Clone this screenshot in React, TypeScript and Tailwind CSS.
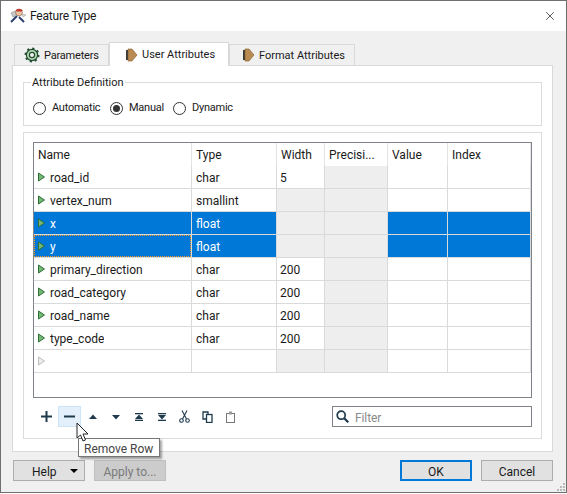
import { X } from "lucide-react";

const rows = [
  { name: "road_id", type: "char", width: "5" },
  { name: "vertex_num", type: "smallint", width: "", noWidth: true },
  { name: "x", type: "float", width: "", noWidth: true, selected: true },
  { name: "y", type: "float", width: "", noWidth: true, selected: true, focus: true },
  { name: "primary_direction", type: "char", width: "200" },
  { name: "road_category", type: "char", width: "200" },
  { name: "road_name", type: "char", width: "200" },
  { name: "type_code", type: "char", width: "200" },
  { name: "", type: "", width: "", noWidth: true, empty: true },
];

const gridCols = "grid grid-cols-[158px_85px_48px_63px_60px_83px]";

function Arrow({ muted }: { muted?: boolean }) {
  return (
    <svg width="9" height="11" viewBox="0 0 9 11" className="shrink-0">
      <path
        d="M1.5 1 L7.5 5 L1.5 9 Z"
        fill={muted ? "#ececec" : "#74b874"}
        stroke={muted ? "#bdbdbd" : "#2f6f3a"}
        strokeWidth="1"
      />
    </svg>
  );
}

function TabArrow() {
  return (
    <svg width="13" height="14" viewBox="0 0 13 14" className="shrink-0">
      <path d="M1 2 H3 V12 H1 Z" fill="#3a3a3a" />
      <path d="M3 1 H7 L12 7 L7 13 H3 Z" fill="#b98b52" stroke="#7d5a2e" strokeWidth="0.6" />
    </svg>
  );
}

function Gear() {
  return (
    <svg width="16" height="16" viewBox="0 0 16 16" className="shrink-0">
      <circle cx="8" cy="8" r="5.6" fill="#b5d6ae" stroke="#1f4d33" strokeWidth="1.2" />
      <circle cx="8" cy="8" r="6.6" fill="none" stroke="#1f4d33" strokeWidth="1.8" strokeDasharray="2.2 2.98" />
      <circle cx="8" cy="8" r="2.6" fill="#f0f0f0" stroke="#1f4d33" strokeWidth="1.2" />
    </svg>
  );
}

function AppIcon() {
  return (
    <svg width="18" height="18" viewBox="0 0 18 18" className="shrink-0">
      <path d="M2 15 L8 9" stroke="#2a3f6b" strokeWidth="2" />
      <path d="M10 10 L15 15" stroke="#2a3f6b" strokeWidth="2" />
      <path d="M2 6 L6 4 L8 8 L4 10 Z" fill="#c9c9c9" stroke="#777" strokeWidth="0.5" />
      <circle cx="10" cy="5.5" r="3.4" fill="#e8c4a4" stroke="#8a5a3a" strokeWidth="0.6" />
      <path d="M6.5 3.5 Q10 0 14 3.5 L12 4.5 L8 4.5 Z" fill="#c2392f" />
      <path d="M13 7 L17 8 L14 10 Z" fill="#d9d9d9" stroke="#888" strokeWidth="0.4" />
    </svg>
  );
}

function Radio({ label, checked }: { label: string; checked?: boolean }) {
  return (
    <div className="flex items-center gap-[6px]">
      <span className="flex h-[13px] w-[13px] items-center justify-center rounded-full border border-[#333] bg-white">
        {checked && <span className="h-[7px] w-[7px] rounded-full bg-[#333]" />}
      </span>
      <span className="text-[11px] tracking-[-0.25px]">{label}</span>
    </div>
  );
}

function TableRow({ row }: { row: (typeof rows)[number] }) {
  const bg = row.selected ? "bg-[#0078d7] text-white" : "bg-white";
  const grey = "bg-[#eeeeee]";
  const line = "border-r border-b border-[#dadada] h-[23px] leading-[25px]";
  return (
    <div className={gridCols}>
      <div className={`${line} ${bg} relative flex items-center gap-[4px] pl-[3px]`}>
        <Arrow muted={row.empty} />
        <span className="mt-[2px] truncate leading-[18px]">{row.name}</span>
        {row.focus && (
          <span className="absolute inset-0 border border-dotted border-[#f59a23]" />
        )}
      </div>
      <div className={`${line} ${bg} truncate px-[4px]`}>{row.type}</div>
      <div className={`${line} ${row.noWidth ? grey : "bg-white"} truncate px-[3px]`}>{row.width}</div>
      <div className={`${line} ${grey}`} />
      <div className={`${line} ${bg}`} />
      <div className={`${line} ${bg}`} />
    </div>
  );
}

function ToolIcon({ children, active }: { children: React.ReactNode; active?: boolean }) {
  return (
    <div
      className={`flex h-[21px] w-[23px] items-center justify-center border ${
        active ? "border-[#cce4f7] bg-[#e3f0fb]" : "border-transparent"
      }`}
    >
      {children}
    </div>
  );
}

function Tri({ down, bar }: { down?: boolean; bar?: boolean }) {
  return (
    <svg width="10" height="8" viewBox="0 0 10 8">
      {bar && <rect x="1" y="0" width="8" height="1.3" fill="#1f3a4d" />}
      {bar && <rect x="1" y="6.7" width="8" height="1.3" fill="#1f3a4d" />}
      <path d={down ? "M1 2 H9 L5 6.5 Z" : "M5 1.5 L9 6 H1 Z"} fill="#1f3a4d" />
    </svg>
  );
}

function Button({ children, className }: { children: React.ReactNode; className?: string }) {
  return (
    <div className={`flex h-[21px] w-[72px] items-center justify-center border pt-[2px] ${className ?? "border-[#adadad] bg-[#e1e1e1]"}`}>
      {children}
    </div>
  );
}

export default function App() {
  return (
    <div
      className="relative h-[494px] w-[567px] overflow-hidden bg-white text-[12px] text-[#1a1a1a]"
      style={{ fontFamily: 'Roboto, "Noto Sans", sans-serif' }}
    >
      <div className="flex h-[493px] flex-col border border-[#6f6f6f] bg-[#f0f0f0]">
        {/* title bar */}
        <div className="flex h-[30px] shrink-0 items-center justify-between bg-white pl-[8px] pr-[9px]">
          <div className="flex items-center gap-[3px] text-[12px] tracking-[-0.2px]">
            <AppIcon />
            <span>Feature Type</span>
          </div>
          <X size={14} strokeWidth={1.2} />
        </div>

        {/* tabs */}
        <div className="flex h-[34px] shrink-0 items-end pl-[13px] text-[11px]">
          <div className="flex h-[21px] w-[95px] items-center gap-[4px] border border-b-0 border-[#d9d9d9] bg-[#f0f0f0] pl-[9px]">
            <Gear />
            <span className="mt-[2px] tracking-[-0.2px]">Parameters</span>
          </div>
          <div className="z-10 -mb-px flex h-[24px] w-[120px] items-center gap-[4px] border border-b-0 border-[#d9d9d9] bg-white pl-[15px]">
            <TabArrow />
            <span className="mt-[2px]">User Attributes</span>
          </div>
          <div className="flex h-[21px] w-[126px] items-center gap-[4px] border border-b-0 border-[#d9d9d9] bg-[#f0f0f0] pl-[12px]">
            <TabArrow />
            <span className="mt-[2px] whitespace-nowrap">Format Attributes</span>
          </div>
        </div>

        {/* pane */}
        <div className="ml-[11px] mr-[13px] flex h-[387px] shrink-0 flex-col border border-[#d9d9d9] bg-white px-[10px] pt-[16px]">
          <div className="relative h-[44px] shrink-0 border border-[#dcdcdc]">
            <span className="absolute -top-[7px] left-[7px] bg-white px-px text-[11px] leading-[14px]">Attribute Definition</span>
            <div className="flex h-full items-center pl-[9px] pt-[8px]">
              <div className="w-[77px]"><Radio label="Automatic" /></div>
              <div className="w-[63px]"><Radio label="Manual" checked /></div>
              <Radio label="Dynamic" />
            </div>
          </div>

          <div className="mt-[6px] flex h-[307px] shrink-0 flex-col border border-[#dcdcdc] px-[9px] pt-[9px]">
            <div className="h-[256px] w-[499px] shrink-0 border border-[#7f838a] bg-white">
              <div className={gridCols}>
                {["Name", "Type", "Width", "Precisi...", "Value", "Index"].map((h) => (
                  <div
                    key={h}
                    className="h-[23px] border-r border-[#e4e4e4] px-[4px] leading-[25px]"
                  >
                    {h}
                  </div>
                ))}
              </div>
              {rows.map((row, i) => (
                <TableRow key={i} row={row} />
              ))}
            </div>

            <div className="mt-[8px] flex items-center">
              <div className="ml-[2px] flex items-center">
                <ToolIcon>
                  <svg width="11" height="11" viewBox="0 0 11 11">
                    <path d="M5.5 0 V11 M0 5.5 H11" stroke="#1f3a4d" strokeWidth="2" />
                  </svg>
                </ToolIcon>
                <ToolIcon active>
                  <svg width="11" height="3" viewBox="0 0 11 3">
                    <path d="M0 1.5 H11" stroke="#1f3a4d" strokeWidth="2" />
                  </svg>
                </ToolIcon>
                <ToolIcon><Tri /></ToolIcon>
                <ToolIcon><Tri down /></ToolIcon>
                <ToolIcon><Tri bar /></ToolIcon>
                <ToolIcon><Tri down bar /></ToolIcon>
                <ToolIcon>
                  <svg width="11" height="13" viewBox="0 0 11 13" fill="none" stroke="#1f3a4d" strokeWidth="1.1">
                    <circle cx="2.5" cy="10.5" r="1.8" />
                    <circle cx="8.5" cy="10.5" r="1.8" />
                    <path d="M3.5 9 L8 0.5 M7.5 9 L3 0.5" />
                  </svg>
                </ToolIcon>
                <ToolIcon>
                  <svg width="11" height="12" viewBox="0 0 11 12" fill="none" stroke="#1f3a4d" strokeWidth="1.3">
                    <path d="M4 8 H1 V1 H6 V3.5" />
                    <rect x="4.5" y="3.5" width="5.5" height="8" />
                  </svg>
                </ToolIcon>
                <ToolIcon>
                  <svg width="9" height="12" viewBox="0 0 9 12">
                    <rect x="0.5" y="2.5" width="8" height="9" fill="none" stroke="#777" />
                    <rect x="3" y="0.5" width="3" height="3" fill="#999" />
                  </svg>
                </ToolIcon>
              </div>
              <div className="ml-auto flex h-[21px] w-[200px] items-center gap-[6px] border border-[#7f838a] bg-white pl-[3px] text-[#8a8a8a]">
                <svg width="13" height="13" viewBox="0 0 13 13" fill="none" stroke="#1f3a4d" strokeWidth="1.7">
                  <circle cx="5.2" cy="5.2" r="4" />
                  <path d="M8.2 8.2 L12.3 12.3" strokeWidth="2.2" />
                </svg>
                <span className="mt-[2px] tracking-[-0.1px]">Filter</span>
              </div>
            </div>
          </div>
        </div>

        {/* footer buttons */}
        <div className="mt-[8px] flex items-center pl-[12px] pr-[13px]">
          <Button>
            <div className="flex w-full items-center justify-between pl-[18px] pr-[6px]">
              <span>Help</span>
              <span className="-mt-[2px] h-0 w-0 border-x-[4px] border-t-[4px] border-x-transparent border-t-black" />
            </div>
          </Button>
          <Button className="ml-[9px] border-[#bfbfbf] bg-[#cccccc] text-[#7a7a7a]">Apply to...</Button>
          <Button className="ml-auto border-2 border-[#0078d7] bg-[#e1e1e1]">OK</Button>
          <Button className="ml-[9px] border-[#adadad] bg-[#e1e1e1]">Cancel</Button>
        </div>
      </div>

      {/* tooltip over the toolbar */}
      <div className="absolute left-[78px] top-[438px] z-20 flex h-[19px] w-[82px] items-center whitespace-nowrap border border-[#767676] bg-white px-[5px] pt-[2px] text-[#444] shadow-[2px_2px_2px_rgba(0,0,0,0.35)]">
        Remove Row
      </div>

      {/* mouse pointer */}
      <svg width="13" height="20" viewBox="0 0 13 20" className="absolute left-[76px] top-[422px] z-30">
        <path d="M1 1 V16 L4.5 13 L7 19 L9.5 18 L7 12 H12 Z" fill="white" stroke="#222" strokeWidth="1" />
      </svg>

      {/* resize grip */}
      <svg width="10" height="10" viewBox="0 0 10 10" className="absolute left-[556px] top-[482px]" fill="#b8b8b8">
        <rect x="7" y="1" width="2" height="2" />
        <rect x="4" y="4" width="2" height="2" />
        <rect x="7" y="4" width="2" height="2" />
        <rect x="1" y="7" width="2" height="2" />
        <rect x="4" y="7" width="2" height="2" />
        <rect x="7" y="7" width="2" height="2" />
      </svg>
    </div>
  );
}
